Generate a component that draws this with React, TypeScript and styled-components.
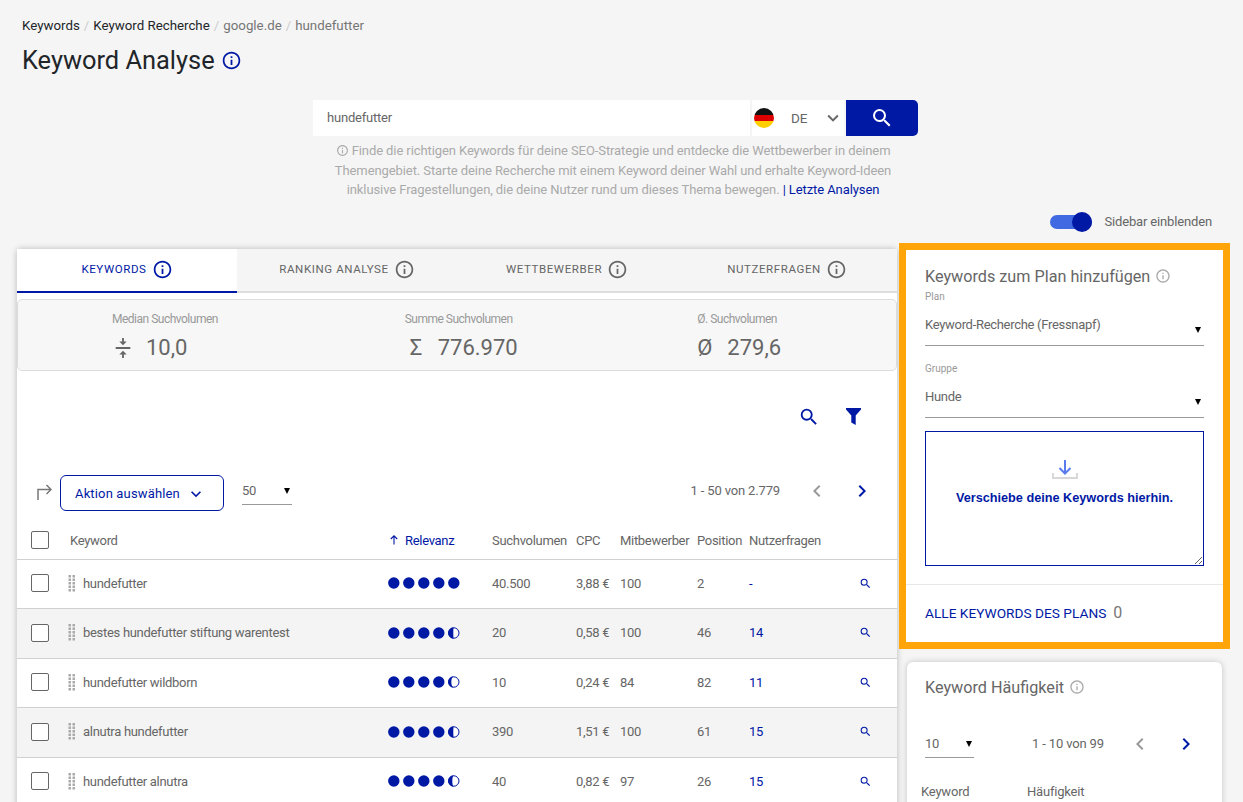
import React from "react";
import styled, { createGlobalStyle } from "styled-components";
import { MdInfoOutline, MdSearch, MdVerticalAlignCenter, MdKeyboardArrowDown, MdChevronLeft, MdChevronRight } from "react-icons/md";

const BLUE = "#0019a5";
const TEXT = "#666";

const GlobalStyle = createGlobalStyle`
  html, body {
    margin: 0;
    height: 802px;
    overflow: hidden;
    background: #f5f5f5;
    font-family: Roboto, "Liberation Sans", sans-serif;
    color: ${TEXT};
  }
  * { box-sizing: border-box; }
`;

const Page = styled.div`
  width: 1243px;
  height: 802px;
  overflow: hidden;
`;

const Header = styled.header`
  padding: 17px 0 0 22px;
`;

const Breadcrumb = styled.div`
  display: flex;
  gap: 4px;
  font-size: 13.3px;
  line-height: 17px;
  color: #ccc;
`;

const Crumb = styled.span<{ $active?: boolean }>`
  color: ${({ $active }) => ($active ? "#757575" : "#212529")};
`;

const Title = styled.h1`
  display: flex;
  align-items: center;
  gap: 6px;
  margin: 10px 0 0;
  height: 32px;
  font-size: 25.4px;
  font-weight: 400;
  color: #212529;
  svg { color: ${BLUE}; }
`;

const SearchArea = styled.section`
  width: 605px;
  margin: 24px 0 0 313px;
`;

const SearchBar = styled.div`
  display: flex;
  height: 36px;
`;

const SearchInput = styled.div`
  width: 437px;
  background: #fff;
  padding-left: 14px;
  font-size: 13px;
  letter-spacing: -0.2px;
  line-height: 35px;
  color: #666;
`;

const Country = styled.div`
  display: flex;
  align-items: center;
  width: 92px;
  margin-left: 2px;
  background: #fff;
  font-size: 13.5px;
  svg { margin-left: 14px; color: #666; }
`;

const Flag = styled.span`
  width: 20px;
  height: 20px;
  margin: 0 17px 0 2px;
  border-radius: 50%;
  background: linear-gradient(#111 0 33%, #d00 33% 66%, #ffce00 66%);
`;

const SearchButton = styled.button`
  display: flex;
  align-items: center;
  justify-content: center;
  flex: 1;
  margin-left: 2px;
  border: 0;
  padding: 0;
  background: ${BLUE};
  border-radius: 0 5px 5px 0;
  color: #fff;
`;

const Hint = styled.div`
  width: 590px;
  margin: 5px 0 0 5px;
  font-size: 13px;
  letter-spacing: -0.09px;
  line-height: 19.5px;
  text-align: center;
  color: #aaa;
  a { color: ${BLUE}; }
  svg { vertical-align: -2px; }
`;

const HintLine = styled.div`
  white-space: nowrap;
`;

const ToggleRow = styled.div`
  display: flex;
  justify-content: flex-end;
  align-items: center;
  gap: 12px;
  height: 22px;
  margin: 11px 31px 0 0;
  font-size: 13px;
  letter-spacing: -0.15px;
`;

const Toggle = styled.span`
  position: relative;
  width: 42px;
  height: 14px;
  border-radius: 7px;
  background: #4169e1;
  &::after {
    content: "";
    position: absolute;
    right: 0;
    top: -3px;
    width: 20px;
    height: 20px;
    border-radius: 50%;
    background: ${BLUE};
  }
`;

const Main = styled.main`
  display: flex;
  align-items: flex-start;
  gap: 2px;
  margin: 10px 0 0 17px;
`;

const LeftCard = styled.section`
  width: 880px;
  margin-top: 6px;
  background: #fff;
  box-shadow: 0 0 6px rgba(0, 0, 0, 0.25);
  border-radius: 3px 3px 0 0;
`;

const Tabs = styled.nav`
  display: grid;
  grid-template-columns: repeat(4, 220px);
  background: #f5f5f5;
`;

const Tab = styled.div<{ $active?: boolean }>`
  display: flex;
  align-items: center;
  justify-content: center;
  gap: 5px;
  height: 44px;
  padding-bottom: 1px;
  font-size: 11.5px;
  letter-spacing: 0.6px;
  background: ${({ $active }) => ($active ? "#fff" : "#f5f5f5")};
  color: ${({ $active }) => ($active ? BLUE : TEXT)};
  border-bottom: 2px solid ${({ $active }) => ($active ? BLUE : "#ddd")};
`;

const Stats = styled.div`
  display: grid;
  grid-template-columns: repeat(3, 1fr);
  height: 72px;
  margin-top: 6px;
  background: #f7f7f7;
  border: 1px solid #ddd;
  border-radius: 5px;
`;

const Stat = styled.div`
  padding: 12px 0 0 94px;
`;

const StatLabel = styled.div`
  font-size: 12px;
  letter-spacing: -0.5px;
  line-height: 14px;
  color: #999;
`;

const StatValue = styled.div`
  display: flex;
  align-items: center;
  margin-top: 8px;
  font-size: 22px;
  line-height: 28px;
  color: #666;
`;

const StatIcon = styled.span<{ $width: number; $indent?: number }>`
  display: flex;
  width: ${({ $width }) => $width}px;
  margin-left: ${({ $indent = 0 }) => $indent}px;
`;

const TableTools = styled.div`
  display: flex;
  justify-content: flex-end;
  align-items: center;
  gap: 26px;
  height: 30px;
  margin-top: 31px;
  padding-right: 36px;
  color: ${BLUE};
`;

const ActionRow = styled.div`
  display: flex;
  align-items: center;
  height: 36px;
  margin-top: 43px;
  padding-left: 20px;
`;

const ActionButton = styled.button`
  display: flex;
  align-items: center;
  justify-content: space-between;
  width: 164px;
  height: 36px;
  margin-left: 8px;
  padding: 2px 17px 0 14px;
  background: #fff;
  border: 1px solid ${BLUE};
  border-radius: 6px;
  color: ${BLUE};
  font: 13px Roboto, sans-serif;
  letter-spacing: 0.15px;
  white-space: nowrap;
`;

const SmallSelect = styled.div<{ $width: number }>`
  position: relative;
  width: ${({ $width }) => $width}px;
  height: 28px;
  font-size: 13px;
  letter-spacing: -0.3px;
  line-height: 28px;
  border-bottom: 1px solid #999;
  &::after {
    content: "";
    position: absolute;
    right: 2px;
    top: 11px;
    border-left: 3px solid transparent;
    border-right: 3px solid transparent;
    border-top: 6px solid #000;
  }
`;

const ActionSelect = styled(SmallSelect)`
  margin: -4px 0 0 18px;
`;

const Pager = styled.div<{ $gap: number }>`
  display: flex;
  align-items: center;
  gap: ${({ $gap }) => $gap}px;
  font-size: 13px;
  letter-spacing: -0.15px;
`;

const ActionPager = styled(Pager)`
  margin: -4px 23px 0 auto;
`;

const PagerArrows = styled.span<{ $gap: number }>`
  display: flex;
  gap: ${({ $gap }) => $gap}px;
`;

const ArrowPrev = styled(MdChevronLeft)`
  color: #999;
`;

const ArrowNext = styled(MdChevronRight)`
  color: ${BLUE};
`;

const COLUMNS = "53px 318px 104px 84px 44px 77px 52px 110px 38px";

const HeadRow = styled.div`
  display: grid;
  grid-template-columns: ${COLUMNS};
  align-items: center;
  height: 49.3px;
  padding-top: 11px;
  border-bottom: 1px solid #d0d0d0;
  font-size: 13px;
  letter-spacing: -0.3px;
`;

const SortHead = styled.span`
  display: flex;
  align-items: center;
  gap: 5px;
  color: ${BLUE};
  white-space: nowrap;
`;

const Row = styled.div<{ $even?: boolean }>`
  display: grid;
  grid-template-columns: ${COLUMNS};
  align-items: center;
  height: 49.5px;
  padding-bottom: 2px;
  border-bottom: 1px solid #d0d0d0;
  font-size: 13px;
  letter-spacing: -0.3px;
  background: ${({ $even }) => ($even ? "#f4f4f4" : "#fff")};
`;

const Check = styled.span`
  display: block;
  width: 18px;
  height: 18px;
  margin-left: 14px;
  background: #fff;
  border: 1px solid #666;
  border-radius: 2px;
`;

const KeywordCell = styled.span`
  display: flex;
  align-items: center;
  gap: 7px;
  margin-left: -2px;
`;

const DotRow = styled.span`
  display: flex;
`;

const QuestionLink = styled.span`
  color: ${BLUE};
`;

const RowSearch = styled(MdSearch)`
  color: ${BLUE};
`;

const Sidebar = styled.aside`
  display: flex;
  flex-direction: column;
  align-items: center;
  gap: 13px;
  width: 331px;
`;

const PlanHighlight = styled.div`
  width: 331px;
  border: 7px solid #ffa50a;
`;

const PlanBody = styled.div`
  padding: 16px 19px 18px;
  background: #fff;
`;

const CardTitle = styled.h2`
  display: flex;
  align-items: center;
  gap: 5px;
  margin: 0;
  font-size: 16.2px;
  line-height: 21px;
  font-weight: 400;
  color: #666;
  svg { color: #aaa; }
`;

const FieldLabel = styled.div`
  margin-top: 3px;
  font-size: 10px;
  line-height: 14px;
  color: #999;
`;

const Field = styled.div`
  position: relative;
  height: 42px;
  padding-top: 11px;
  font-size: 13px;
  letter-spacing: -0.3px;
  line-height: 20px;
  border-bottom: 1px solid #999;
  &::after {
    content: "";
    position: absolute;
    right: 3px;
    top: 23px;
    border-left: 3px solid transparent;
    border-right: 3px solid transparent;
    border-top: 6px solid #000;
  }
`;

const SecondLabel = styled(FieldLabel)`
  margin-top: 16px;
`;

const DropZone = styled.div`
  display: flex;
  flex-direction: column;
  align-items: center;
  height: 135px;
  margin-top: 13px;
  padding-top: 28px;
  border: 1px solid ${BLUE};
  resize: both;
  overflow: hidden;
  font-size: 12.7px;
  font-weight: 700;
  color: ${BLUE};
  span { margin-top: 11px; font-family: "Liberation Sans", sans-serif; }
`;

const PlanFooter = styled.div`
  display: flex;
  align-items: center;
  gap: 7px;
  height: 58px;
  padding: 0 19px 1px;
  background: #fff;
  border-top: 1px solid #e8e8e8;
  font-size: 13.7px;
  color: ${BLUE};
  b { font-weight: 400; font-size: 16px; color: #777; }
`;

const FreqCard = styled.div`
  width: 315px;
  height: 160px;
  padding: 15px 18px 0 14px;
  background: #fff;
  border-radius: 6px;
  box-shadow: 0 0 6px rgba(0, 0, 0, 0.2);
`;

const FreqTitle = styled(CardTitle)`
  padding-left: 4px;
`;

const FreqControls = styled.div`
  display: flex;
  align-items: center;
  margin: 32px 0 0 4px;
`;

const FreqPager = styled(Pager)`
  margin: 0 0 0 58px;
`;

const FreqHead = styled.div`
  display: grid;
  grid-template-columns: 106px 1fr;
  margin-top: 26px;
  font-size: 13px;
  letter-spacing: -0.2px;
`;

// filled dots plus the last one, which is only filled to some part
const Dot = ({ part }: { part?: number }) => (
  <svg width="15" height="12" viewBox="0 0 15 12">
    {part === undefined ? (
      <circle cx="5.8" cy="6" r="5.7" fill={BLUE} />
    ) : (
      <>
        <circle cx="5.8" cy="6" r="5.2" fill="#fff" stroke={BLUE} />
        <path d={`M5.8 .3 A5.7 5.7 0 0 0 5.8 11.7 A${part} 5.7 0 0 1 5.8 .3Z`} fill={BLUE} />
      </>
    )}
  </svg>
);

const Drag = () => (
  <svg width="8" height="17" viewBox="0 0 8 17" fill="#aaa">
    {[0, 3.5, 7, 10.5, 14].map((y) => (
      <React.Fragment key={y}>
        <rect x="0.5" y={y} width="2.5" height="2.5" />
        <rect x="4.5" y={y} width="2.5" height="2.5" />
      </React.Fragment>
    ))}
  </svg>
);

const TurnArrow = () => (
  <svg width="15" height="17" viewBox="0 0 15 17" fill="none" stroke="#777" strokeWidth="1.5">
    <path d="M1 16V5.500H14M9.500 1l4.500 4.500L9.500 10" />
  </svg>
);

const UpArrow = () => (
  <svg width="12" height="12" viewBox="0 0 12 12" fill="none" stroke={BLUE} strokeWidth="1.1">
    <path d="M6 10.500V2M2.800 5L6 1.800 9.200 5" />
  </svg>
);

const FilterIcon = () => (
  <svg width="15" height="17" viewBox="0 0 15 17" fill="currentColor">
    <path d="M0 0h15v1.500L9.700 7.500V17L5.300 14.500v-7L0 1.500z" />
  </svg>
);

const DropIcon = () => (
  <svg width="26" height="20" viewBox="0 0 26 20" fill="none" strokeWidth="2">
    <path d="M1 13v5h24v-5" stroke="#d8d8d8" />
    <path d="M13 0v13M7.500 8l5.500 5.500L18.500 8" stroke="#5a7cf0" />
  </svg>
);

const rows = [
  { kw: "hundefutter", vol: "40.500", cpc: "3,88 €", comp: "100", pos: "2", q: "-" },
  { kw: "bestes hundefutter stiftung warentest", part: 0.5, vol: "20", cpc: "0,58 €", comp: "100", pos: "46", q: "14" },
  { kw: "hundefutter wildborn", part: 2.5, vol: "10", cpc: "0,24 €", comp: "84", pos: "82", q: "11" },
  { kw: "alnutra hundefutter", part: 0.5, vol: "390", cpc: "1,51 €", comp: "100", pos: "61", q: "15" },
  { kw: "hundefutter alnutra", part: 1.5, vol: "40", cpc: "0,82 €", comp: "97", pos: "26", q: "15" },
];

const tabs = ["KEYWORDS", "RANKING ANALYSE", "WETTBEWERBER", "NUTZERFRAGEN"];

export default function App() {
  return (
    <Page>
      <GlobalStyle />
      <Header>
        <Breadcrumb>
          <Crumb>Keywords</Crumb>/<Crumb>Keyword Recherche</Crumb>/<Crumb $active>google.de</Crumb>/
          <Crumb $active>hundefutter</Crumb>
        </Breadcrumb>
        <Title>
          Keyword Analyse <MdInfoOutline size={21} />
        </Title>
      </Header>

      <SearchArea>
        <SearchBar>
          <SearchInput>hundefutter</SearchInput>
          <Country>
            <Flag />
            DE
            <MdKeyboardArrowDown size={22} />
          </Country>
          <SearchButton>
            <MdSearch size={24} />
          </SearchButton>
        </SearchBar>
        <Hint>
          <HintLine>
            <MdInfoOutline size={13} /> Finde die richtigen Keywords für deine SEO-Strategie und entdecke die
            Wettbewerber in deinem
          </HintLine>
          <HintLine>
            Themengebiet. Starte deine Recherche mit einem Keyword deiner Wahl und erhalte Keyword-Ideen
          </HintLine>
          <HintLine>
            inklusive Fragestellungen, die deine Nutzer rund um dieses Thema bewegen. <a>| Letzte Analysen</a>
          </HintLine>
        </Hint>
      </SearchArea>

      <ToggleRow>
        <Toggle />
        Sidebar einblenden
      </ToggleRow>

      <Main>
        <LeftCard>
          <Tabs>
            {tabs.map((t, i) => (
              <Tab key={t} $active={i === 0}>
                {t} <MdInfoOutline size={21} />
              </Tab>
            ))}
          </Tabs>
          <Stats>
            <Stat>
              <StatLabel>Median Suchvolumen</StatLabel>
              <StatValue>
                <StatIcon $width={34}>
                  <MdVerticalAlignCenter size={22} />
                </StatIcon>
                10,0
              </StatValue>
            </Stat>
            <Stat>
              <StatLabel>Summe Suchvolumen</StatLabel>
              <StatValue>
                <StatIcon $width={28} $indent={5}>
                  Σ
                </StatIcon>
                776.970
              </StatValue>
            </Stat>
            <Stat>
              <StatLabel>Ø. Suchvolumen</StatLabel>
              <StatValue>
                <StatIcon $width={30}>Ø</StatIcon>
                279,6
              </StatValue>
            </Stat>
          </Stats>
          <TableTools>
            <MdSearch size={22} />
            <FilterIcon />
          </TableTools>
          <ActionRow>
            <TurnArrow />
            <ActionButton>
              Aktion auswählen <MdKeyboardArrowDown size={20} />
            </ActionButton>
            <ActionSelect $width={50}>50</ActionSelect>
            <ActionPager $gap={25}>
              1 - 50 von 2.779
              <PagerArrows $gap={21}>
                <ArrowPrev size={24} />
                <ArrowNext size={24} />
              </PagerArrows>
            </ActionPager>
          </ActionRow>
          <HeadRow>
            <Check />
            <span>Keyword</span>
            <SortHead>
              <UpArrow /> Relevanz
            </SortHead>
            <span>Suchvolumen</span>
            <span>CPC</span>
            <span>Mitbewerber</span>
            <span>Position</span>
            <span>Nutzerfragen</span>
            <span />
          </HeadRow>
          {rows.map((r, i) => (
            <Row key={r.kw} $even={i % 2 === 1}>
              <Check />
              <KeywordCell>
                <Drag />
                {r.kw}
              </KeywordCell>
              <DotRow>
                <Dot />
                <Dot />
                <Dot />
                <Dot />
                <Dot part={r.part} />
              </DotRow>
              <span>{r.vol}</span>
              <span>{r.cpc}</span>
              <span>{r.comp}</span>
              <span>{r.pos}</span>
              <QuestionLink>{r.q}</QuestionLink>
              <RowSearch size={13} />
            </Row>
          ))}
        </LeftCard>

        <Sidebar>
          <PlanHighlight>
            <PlanBody>
              <CardTitle>
                Keywords zum Plan hinzufügen <MdInfoOutline size={16} />
              </CardTitle>
              <FieldLabel>Plan</FieldLabel>
              <Field>Keyword-Recherche (Fressnapf)</Field>
              <SecondLabel>Gruppe</SecondLabel>
              <Field>Hunde</Field>
              <DropZone>
                <DropIcon />
                <span>Verschiebe deine Keywords hierhin.</span>
              </DropZone>
            </PlanBody>
            <PlanFooter>
              ALLE KEYWORDS DES PLANS <b>0</b>
            </PlanFooter>
          </PlanHighlight>
          <FreqCard>
            <FreqTitle>
              Keyword Häufigkeit <MdInfoOutline size={16} />
            </FreqTitle>
            <FreqControls>
              <SmallSelect $width={49}>10</SmallSelect>
              <FreqPager $gap={24}>
                1 - 10 von 99
                <PagerArrows $gap={22}>
                  <ArrowPrev size={24} />
                  <ArrowNext size={24} />
                </PagerArrows>
              </FreqPager>
            </FreqControls>
            <FreqHead>
              <span>Keyword</span>
              <span>Häufigkeit</span>
            </FreqHead>
          </FreqCard>
        </Sidebar>
      </Main>
    </Page>
  );
}
